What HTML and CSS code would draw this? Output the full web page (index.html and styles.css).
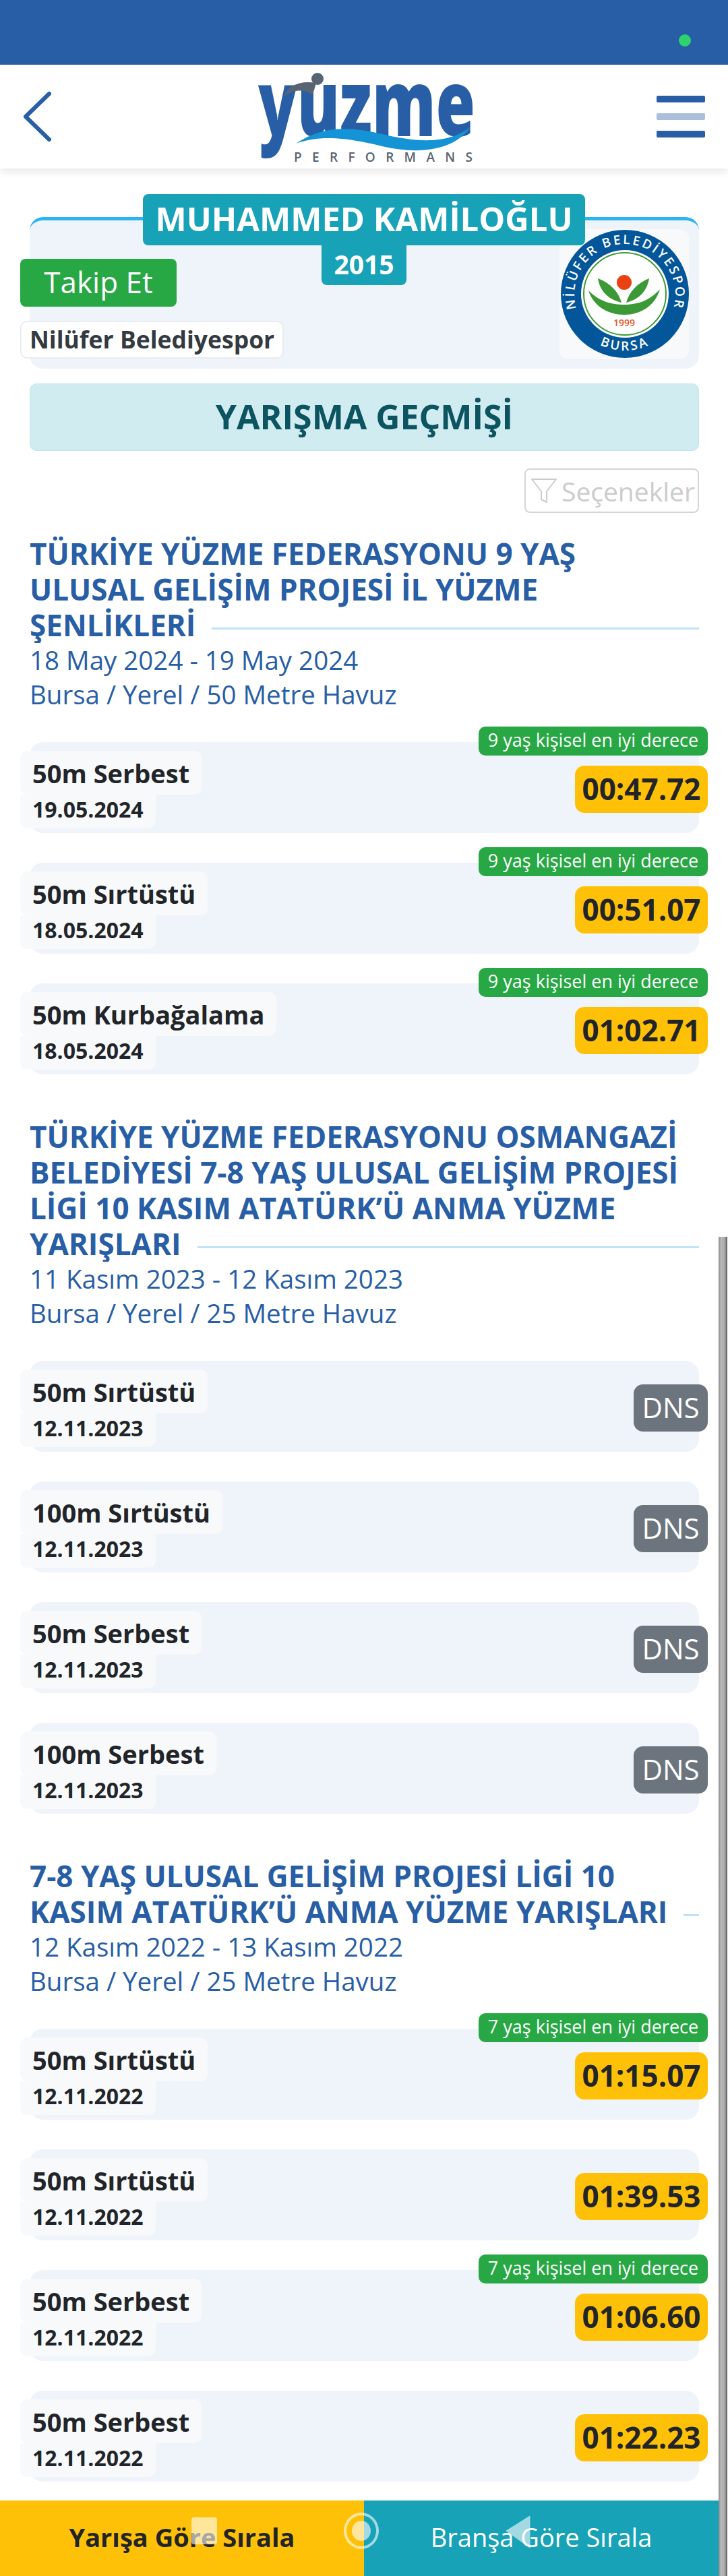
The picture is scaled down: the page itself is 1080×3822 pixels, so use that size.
FILE: index.html
```html
<!DOCTYPE html>
<html lang="tr">
  <head>
    <meta charset="utf-8">
    <title>Yüzme Performans</title>
    <meta name="viewport" content="width=device-width, initial-scale=1.0">
    <link rel="stylesheet" href="styles.css">
  </head>
  <body>
    <div class="page">
      <div class="status"><i class="status-dot"></i></div>

      <header class="topbar">
        <svg class="back" width="50" height="80" viewBox="0 0 50 80"><path d="M43 6 L8 40 L43 74" fill="none" stroke="#285ea5" stroke-width="6" stroke-linejoin="round" stroke-linecap="round"/></svg>
        <svg class="logo" width="330" height="142" viewBox="0 0 330 142">
          <text class="logo-word" x="6" y="99" textLength="322" lengthAdjust="spacingAndGlyphs">yuzme</text>
          <path d="M44 40 C50 24 68 16 92 20 C90 27 89 32 86 38 C78 30 60 28 44 40Z" fill="#566571"/>
          <circle cx="94" cy="14" r="9" fill="#566571"/>
          <path d="M62 110 C100 84 140 84 190 96 C240 108 290 112 322 84 C300 118 250 128 190 114 C140 102 100 96 62 110Z" fill="#1493d6"/>
          <text class="logo-sub" x="59" y="137" textLength="265">PERFORMANS</text>
        </svg>
        <div class="burger"><span></span><span class="burger-mid"></span><span></span></div>
      </header>

      <section class="card">
        <div class="athlete">
          <div class="athlete-name">MUHAMMED KAMİLOĞLU</div>
          <div class="athlete-year">2015</div>
        </div>
        <div class="card-left">
          <a class="follow" href="#">Takip Et</a>
          <div class="club">Nilüfer Belediyespor</div>
        </div>
        <div class="club-logo">
          <svg width="192" height="192" viewBox="0 0 192 192">
            <circle cx="97" cy="96" r="95" fill="#04569b"/>
            <circle cx="97" cy="96" r="65" fill="#fff"/>
            <circle cx="97" cy="96" r="61" fill="none" stroke="#3b9a35" stroke-width="2"/>
            <defs>
              <path id="arcTop" d="M97 96 m-72 22 a75 75 0 1 1 144 0"/>
              <path id="arcBottom" d="M97 96 m-66 52 a84 84 0 0 0 132 0"/>
            </defs>
            <text class="badge-arc"><textPath href="#arcTop" startOffset="50%" text-anchor="middle">NİLÜFER BELEDİYESPOR</textPath></text>
            <text class="badge-arc"><textPath href="#arcBottom" startOffset="50%" text-anchor="middle">BURSA</textPath></text>
            <circle cx="96" cy="79" r="11" fill="#ea4114"/>
            <path d="M57 73 C60 92 72 104 92 109 C88 94 76 80 57 73Z" fill="#3b9a35"/>
            <path d="M133 73 C130 92 118 104 99 109 C103 94 115 80 133 73Z" fill="#3b9a35"/>
            <path d="M43 91 C60 108 78 112 96 112 C116 112 134 106 149 89 C142 114 120 127 96 127 C72 127 50 114 43 91Z" fill="#3b9a35"/>
            <text class="badge-year" x="96" y="144" text-anchor="middle">1999</text>
          </svg>
        </div>
      </section>

      <h1 class="history">YARIŞMA GEÇMİŞİ</h1>

      <div class="options-wrap">
        <a class="options" href="#">
          <svg width="40" height="40" viewBox="0 0 40 40"><path d="M2 3 H38 L24 21 V37 L16 33 V21 Z" fill="none" stroke="#ccc" stroke-width="2" stroke-linejoin="round"/></svg>
          Seçenekler
        </a>
      </div>

      <section class="meet">
        <h2 class="meet-title">TÜRKİYE YÜZME FEDERASYONU 9 YAŞ ULUSAL GELİŞİM PROJESİ İL YÜZME ŞENLİKLERİ</h2>
        <p class="meet-info">18 May 2024 - 19 May 2024</p>
        <p class="meet-info">Bursa / Yerel / 50 Metre Havuz</p>

        <div class="race">
          <div class="race-left"><span class="race-name">50m Serbest</span><span class="race-date">19.05.2024</span></div>
          <span class="pb">9 yaş kişisel en iyi derece</span>
          <span class="result">00:47.72</span>
        </div>
        <div class="race">
          <div class="race-left"><span class="race-name">50m Sırtüstü</span><span class="race-date">18.05.2024</span></div>
          <span class="pb">9 yaş kişisel en iyi derece</span>
          <span class="result">00:51.07</span>
        </div>
        <div class="race">
          <div class="race-left"><span class="race-name">50m Kurbağalama</span><span class="race-date">18.05.2024</span></div>
          <span class="pb">9 yaş kişisel en iyi derece</span>
          <span class="result">01:02.71</span>
        </div>
      </section>

      <section class="meet">
        <h2 class="meet-title">TÜRKİYE YÜZME FEDERASYONU OSMANGAZİ BELEDİYESİ 7-8 YAŞ ULUSAL GELİŞİM PROJESİ LİGİ 10 KASIM ATATÜRK’Ü ANMA YÜZME YARIŞLARI</h2>
        <p class="meet-info">11 Kasım 2023 - 12 Kasım 2023</p>
        <p class="meet-info">Bursa / Yerel / 25 Metre Havuz</p>

        <div class="race">
          <div class="race-left"><span class="race-name">50m Sırtüstü</span><span class="race-date">12.11.2023</span></div>
          <span class="result dns">DNS</span>
        </div>
        <div class="race">
          <div class="race-left"><span class="race-name">100m Sırtüstü</span><span class="race-date">12.11.2023</span></div>
          <span class="result dns">DNS</span>
        </div>
        <div class="race">
          <div class="race-left"><span class="race-name">50m Serbest</span><span class="race-date">12.11.2023</span></div>
          <span class="result dns">DNS</span>
        </div>
        <div class="race">
          <div class="race-left"><span class="race-name">100m Serbest</span><span class="race-date">12.11.2023</span></div>
          <span class="result dns">DNS</span>
        </div>
      </section>

      <section class="meet">
        <h2 class="meet-title">7-8 YAŞ ULUSAL GELİŞİM PROJESİ LİGİ 10 KASIM ATATÜRK’Ü ANMA YÜZME YARIŞLARI</h2>
        <p class="meet-info">12 Kasım 2022 - 13 Kasım 2022</p>
        <p class="meet-info">Bursa / Yerel / 25 Metre Havuz</p>

        <div class="race">
          <div class="race-left"><span class="race-name">50m Sırtüstü</span><span class="race-date">12.11.2022</span></div>
          <span class="pb">7 yaş kişisel en iyi derece</span>
          <span class="result">01:15.07</span>
        </div>
        <div class="race">
          <div class="race-left"><span class="race-name">50m Sırtüstü</span><span class="race-date">12.11.2022</span></div>
          <span class="result">01:39.53</span>
        </div>
        <div class="race">
          <div class="race-left"><span class="race-name">50m Serbest</span><span class="race-date">12.11.2022</span></div>
          <span class="pb">7 yaş kişisel en iyi derece</span>
          <span class="result">01:06.60</span>
        </div>
        <div class="race">
          <div class="race-left"><span class="race-name">50m Serbest</span><span class="race-date">12.11.2022</span></div>
          <span class="result">01:22.23</span>
        </div>
      </section>

      <div class="sortbar">
        <a class="sort sort-active" href="#">Yarışa Göre Sırala</a>
        <a class="sort" href="#">Branşa Göre Sırala</a>
      </div>

      <div class="scrollbar"></div>
      <i class="softkey softkey-square"></i>
      <i class="softkey softkey-circle"></i>
      <svg class="softkey softkey-back" width="40" height="50" viewBox="0 0 40 50"><path d="M37 1 V48 L2 23 Z" fill="#fff" stroke="#fff" stroke-linejoin="round"/></svg>
    </div>
  </body>
</html>
```

FILE: styles.css
```css
*{
  box-sizing:border-box;
  margin:0;
  padding:0;
}
body{
  font-family:"Open Sans",sans-serif;
  background:#fff;
  color:#212529;
}
a{
  text-decoration:none;
}
.page{
  position:relative;
  width:1080px;
  height:3822px;
  overflow:hidden;
  display:flex;
  flex-direction:column;
}
.page > *{
  flex-shrink:0;
}

/* top */
.status{
  height:96px;
  background:#285ea5;
  position:relative;
}
.status-dot{
  position:absolute;
  left:1007px;
  top:51px;
  width:18px;
  height:18px;
  border-radius:50%;
  background:#2fd36e;
}
.topbar{
  height:154px;
  background:#fff;
  box-shadow:0 4px 12px rgba(0,0,0,.1);
  display:flex;
  align-items:center;
  justify-content:space-between;
  padding:0 34px 0 30px;
  position:relative;
  z-index:2;
}
.back{
  display:block;
}
.logo{
  display:block;
  margin-left:30px;
  margin-top:2px;
  overflow:visible;
}
.logo-word{
  font-family:"Open Sans",sans-serif;
  font-size:136px;
  font-weight:800;
  fill:#285ea5;
}
.logo-sub{
  font-family:"Open Sans",sans-serif;
  font-size:19px;
  font-weight:600;
  fill:#566571;
}
.burger{
  width:72px;
  display:flex;
  flex-direction:column;
  gap:16px;
}
.burger span{
  display:block;
  height:10px;
  border-radius:2px;
  background:#285ea5;
}
.burger .burger-mid{
  background:#a9bfdb;
}

/* athlete card */
.card{
  position:relative;
  margin:72px 43px 0 44px;
  height:225px;
  background:#eff3fa;
  border-top:5px solid #2bb5f0;
  border-radius:20px;
  display:flex;
  justify-content:space-between;
}
.athlete{
  position:absolute;
  top:-39px;
  left:168px;
  width:656px;
  display:flex;
  flex-direction:column;
  align-items:center;
  z-index:1;
}
.athlete-name{
  width:656px;
  height:76px;
  background:#17a2b8;
  border-radius:8px;
  color:#fff;
  font-size:49px;
  font-weight:700;
  line-height:72px;
  text-align:center;
  white-space:nowrap;
}
.athlete-year{
  height:59px;
  padding:0 18px;
  background:#17a2b8;
  border-radius:0 0 8px 8px;
  color:#fff;
  font-size:39px;
  font-weight:700;
  line-height:56px;
}
.card-left{
  margin:57px 0 0 -14px;
  display:flex;
  flex-direction:column;
  align-items:flex-start;
  gap:21px;
}
.follow{
  display:block;
  width:232px;
  height:71px;
  background:#28a745;
  border-radius:8px;
  color:#fff;
  font-size:44px;
  line-height:68px;
  text-align:center;
}
.club{
  height:56px;
  width:391px;
  padding:0 12px;
  background:#fff;
  border:2px solid #e9ecef;
  border-radius:10px;
  color:#343a40;
  font-size:35.5px;
  font-weight:700;
  line-height:50px;
  white-space:nowrap;
}
.club-logo{
  width:192px;
  height:193px;
  margin:13px 15px 0 0;
  background:#f8f9fa;
  border-radius:14px;
}
.club-logo svg{
  display:block;
}
.badge-arc{
  font-family:"Open Sans",sans-serif;
  font-size:19px;
  font-weight:600;
  letter-spacing:3px;
  fill:#fff;
}
.badge-year{
  font-family:"Open Sans",sans-serif;
  font-size:14px;
  font-weight:600;
  fill:#e2592d;
}

/* heading */
.history{
  margin:22px 43px 0 44px;
  height:100px;
  background:#d1ecf1;
  border:1px solid #bee5eb;
  border-radius:10px;
  color:#0c5460;
  font-size:50px;
  font-weight:700;
  line-height:96px;
  text-align:center;
}
.options-wrap{
  margin:26px 43px 0 44px;
  display:flex;
  justify-content:flex-end;
}
.options{
  width:259px;
  height:66px;
  border:2px solid #d5d5d5;
  border-radius:8px;
  color:#ccc;
  font-size:39px;
  display:flex;
  align-items:center;
  gap:6px;
  padding-left:7px;
  white-space:nowrap;
}

/* meets */
.meet{
  margin:0 43px 0 44px;
  padding-top:34px;
}
.meet + .meet{
  padding-top:66px;
}
.meet-title{
  color:#285ea5;
  font-size:44px;
  font-weight:700;
  line-height:53px;
  overflow:hidden;
  padding-right:18px;
}
.meet-title::after{
  content:"";
  display:inline-block;
  width:100%;
  height:3px;
  margin-left:24px;
  margin-right:-100%;
  vertical-align:middle;
  background:#bee3f5;
}
.meet-info{
  color:#285ea5;
  font-size:38.5px;
  line-height:51px;
}
.meet-info + .race{
  margin-top:45px;
}
.race{
  position:relative;
  height:135px;
  margin-bottom:44px;
  background:#eff3fa;
  border-radius:20px;
  display:flex;
  justify-content:space-between;
  align-items:flex-start;
}
.race:last-child{
  margin-bottom:0;
}
.race-left{
  margin:13px 0 0 -14px;
  display:flex;
  flex-direction:column;
  align-items:flex-start;
}
.race-name{
  height:65px;
  padding:0 18px;
  background:#f8f9fa;
  border-radius:10px;
  font-size:38px;
  font-weight:700;
  line-height:66px;
  white-space:nowrap;
}
.race-date{
  height:50px;
  padding:0 18px;
  background:#f8f9fa;
  border-radius:0 0 10px 10px;
  font-size:32px;
  font-weight:700;
  line-height:44px;
}
.pb{
  position:absolute;
  top:-23px;
  right:-13px;
  width:340px;
  height:43px;
  background:#28a745;
  border-radius:10px;
  color:#fff;
  font-size:27px;
  line-height:40px;
  text-align:center;
  white-space:nowrap;
}
.result{
  margin:35px -13px 0 0;
  width:197px;
  height:70px;
  background:#ffc107;
  border-radius:14px;
  font-size:44px;
  font-weight:700;
  line-height:68px;
  text-align:center;
}
.result.dns{
  width:110px;
  background:#6c757d;
  color:#fff;
  font-size:42px;
  font-weight:400;
}

/* bottom */
.sortbar{
  margin-top:auto;
  height:112px;
  width:1066px;
  display:flex;
}
.sort{
  flex:1;
  background:#17a2b8;
  color:#fff;
  font-size:38px;
  line-height:108px;
  text-align:center;
  white-space:nowrap;
}
.sort-active{
  flex:0 0 540px;
  background:#ffc107;
  color:#212529;
  font-weight:700;
}
.scrollbar{
  position:absolute;
  left:1066px;
  top:1835px;
  bottom:0;
  width:13px;
  background:linear-gradient(90deg,#888,#bbb 30%,#aaa 70%,#555);
}
.softkey{
  position:absolute;
  display:block;
  opacity:.6;
}
.softkey-square{
  left:284px;
  top:3735px;
  width:38px;
  height:40px;
  border-radius:4px;
  background:#fff;
}
.softkey-circle{
  left:510px;
  top:3728px;
  width:52px;
  height:54px;
  border-radius:50%;
  background:#fff content-box;
  padding:8px;
  border:4px solid #fff;
}
.softkey-back{
  left:749px;
  top:3732px;
}
```
